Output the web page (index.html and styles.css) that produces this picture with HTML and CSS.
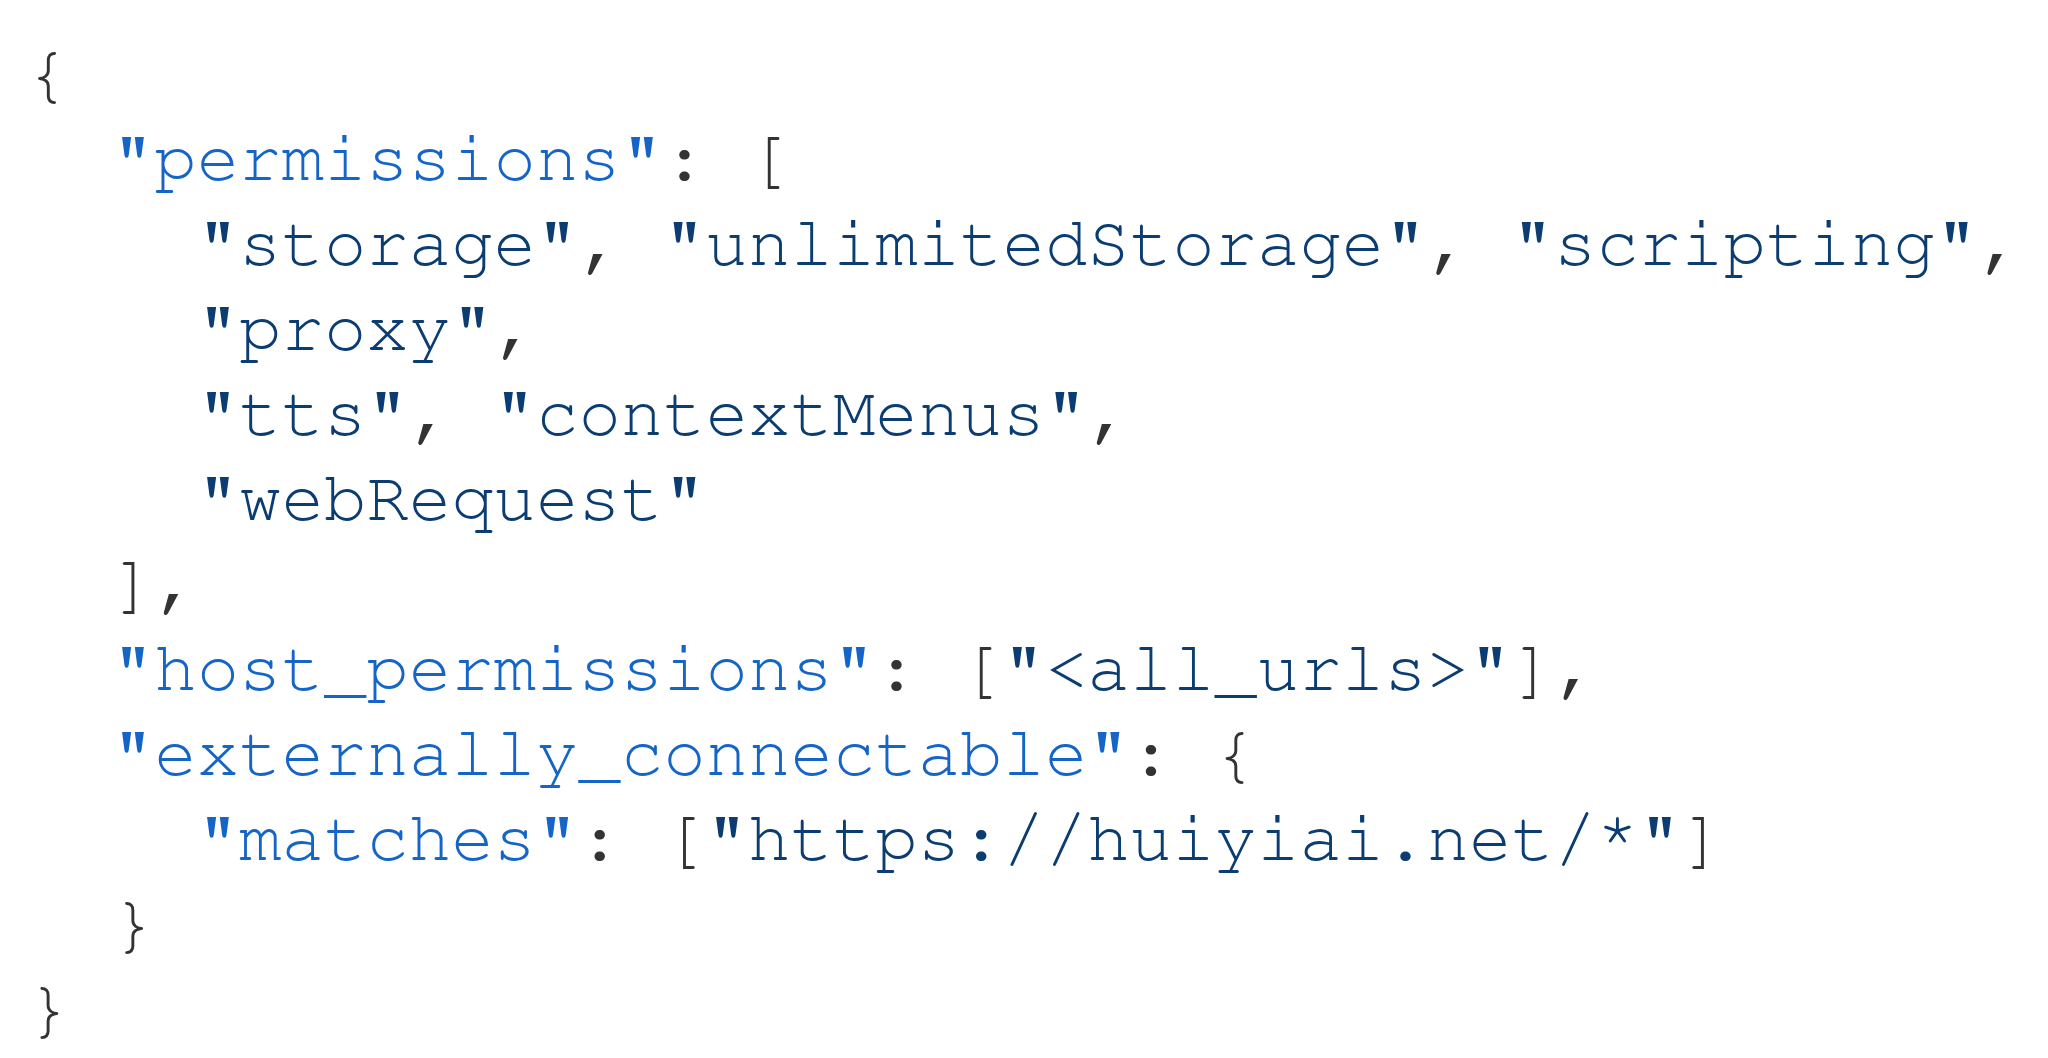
FILE: index.html
```html
<!DOCTYPE html>
<html>
<head>
<meta charset="utf-8">
<link rel="stylesheet" href="styles.css">
</head>
<body>
<pre class="code"><span class="p">{</span>
  <span class="k">"permissions"</span><span class="p">: [</span>
    <span class="s">"storage"</span><span class="p">, </span><span class="s">"unlimitedStorage"</span><span class="p">, </span><span class="s">"scripting"</span><span class="p">,</span>
    <span class="s">"proxy"</span><span class="p">,</span>
    <span class="s">"tts"</span><span class="p">, </span><span class="s">"contextMenus"</span><span class="p">,</span>
    <span class="s">"webRequest"</span>
  <span class="p">],</span>
  <span class="k">"host_permissions"</span><span class="p">: [</span><span class="s">"&lt;all_urls&gt;"</span><span class="p">],</span>
  <span class="k">"externally_connectable"</span><span class="p">: {</span>
    <span class="k">"matches"</span><span class="p">: [</span><span class="s">"https://huiyiai.net/*"</span><span class="p">]</span>
  <span class="p">}</span>
<span class="p">}</span></pre>
</body>
</html>
```
FILE: styles.css
```css
html, body {
  margin: 0;
  padding: 0;
  background: #ffffff;
}
.code {
  margin: 0;
  padding: 31px 0 0 27px;
  font-family: "Nimbus Mono PS", "Nimbus Mono L", "FreeMono", "Courier 10 Pitch", "Liberation Mono", monospace;
  font-size: 70.7px;
  line-height: 85px;
  color: #333333;
}
.p { color: #333333; }
.k { color: #1565c8; }
.s { color: #0b3c72; }
```
